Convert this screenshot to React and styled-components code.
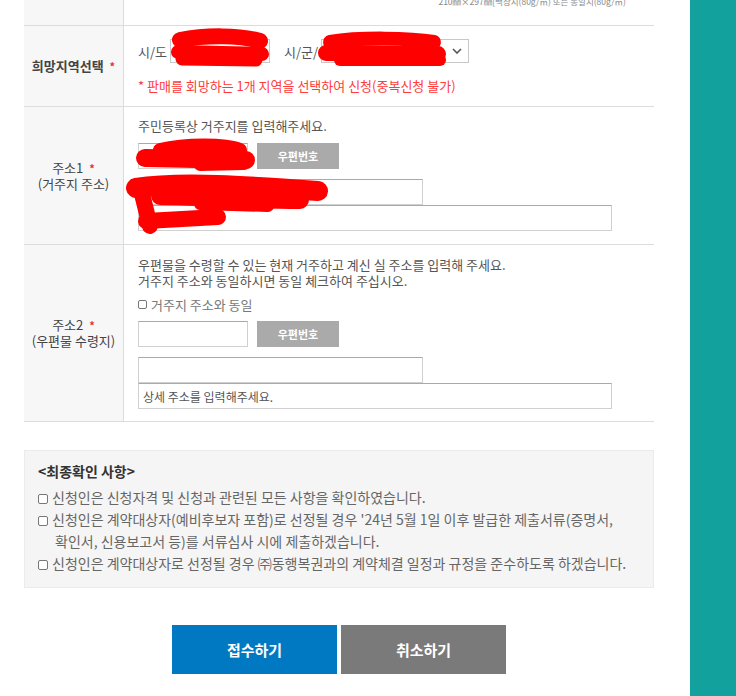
import React from "react";
import styled, { createGlobalStyle } from "styled-components";

const GlobalStyle = createGlobalStyle`
  body {
    margin: 0;
    background: #fff;
    font-family: "Noto Sans CJK KR", "Noto Sans", sans-serif;
    color: #555;
  }
`;

const Page = styled.div`
  position: relative;
  display: flex;
  width: 736px;
  height: 696px;
  overflow: hidden;
`;

const Main = styled.div`
  flex: 0 0 690px;
  box-sizing: border-box;
  padding: 0 36px 0 24px;
`;

const Side = styled.div`
  flex: 1;
  background: #12a19d;
`;

const Table = styled.div`
  margin-top: -20px;
`;

const Row = styled.div`
  display: grid;
  grid-template-columns: 100px 1fr;
  height: ${(p) => p.$h}px;
  box-sizing: border-box;
  border-bottom: 1px solid #dcdcdc;
`;

const Th = styled.div`
  background: #f7f7f7;
  border-right: 1px solid #dcdcdc;
  display: flex;
  flex-direction: column;
  align-items: center;
  justify-content: center;
  font-size: 13px;
  line-height: 16px;
  font-weight: ${(p) => (p.$bold ? 700 : 400)};
  color: #444;
  text-align: center;
  white-space: nowrap;
`;

const Req = styled.span`
  color: #e8322c;
  font-size: 11px;
  font-weight: 700;
  margin-left: 6px;
`;

const Td = styled.div`
  padding: ${(p) => p.$pt}px 0 0 14px;
  font-size: 13px;
  color: #555;
`;

const PaperNote = styled.div`
  text-align: right;
  padding: 15px 28px 0 0;
  font-size: 8.5px;
  line-height: 12px;
  color: #888;
`;

const Inline = styled.div`
  display: flex;
  align-items: center;
  gap: 3px;
  height: 24px;
`;

const Label = styled.span`
  margin-left: ${(p) => p.$ml || 0}px;
  color: #555;
`;

const SelectBox = styled.div`
  box-sizing: border-box;
  width: ${(p) => p.$w}px;
  height: 24px;
  border: 1px solid #c8c8c8;
  background: #fff;
  display: flex;
  align-items: center;
  justify-content: flex-end;
  padding-right: 6px;
`;

const Warn = styled.div`
  margin-top: 14px;
  line-height: 18px;
  color: #ff3b3b;
`;

const Text = styled.div`
  line-height: ${(p) => p.$lh || 18}px;
  color: #555;
`;

const CheckLine = styled.div`
  margin-top: 6px;
  height: 18px;
  display: flex;
  align-items: center;
  color: #777;
`;

const Box = styled.span`
  display: inline-block;
  box-sizing: border-box;
  width: ${(p) => p.$s || 10}px;
  height: ${(p) => p.$s || 10}px;
  border: 1px solid #777;
  border-radius: 2px;
  margin-right: 4px;
  background: #fff;
  vertical-align: -1px;
`;

const ZipRow = styled.div`
  display: flex;
  margin-top: 8px;
`;

const Input = styled.input`
  display: block;
  box-sizing: border-box;
  width: ${(p) => p.$w}px;
  height: 26px;
  margin: ${(p) => p.$mt || 0}px 0 0;
  padding: 0 4px;
  border: 1px solid #d0d0d0;
  border-top-color: #a9a9a9;
  background: #fff;
  font-family: inherit;
  font-size: 12px;
  color: #555;
  outline: none;
  &::placeholder {
    color: #555;
  }
`;

const ZipButton = styled.button`
  width: 82px;
  height: 26px;
  margin-left: 9px;
  border: none;
  background: #aaa;
  color: #fff;
  font-family: inherit;
  font-size: 11px;
  font-weight: 700;
  padding: 0;
`;

const Confirm = styled.div`
  margin-top: 28px;
  box-sizing: border-box;
  height: 138px;
  background: #f5f5f5;
  border: 1px solid #ebebeb;
  padding: 9px 13px 0;
`;

const ConfirmTitle = styled.div`
  font-size: 14px;
  font-weight: 700;
  line-height: 22px;
  color: #333;
  margin-bottom: 4px;
`;

const Item = styled.div`
  font-size: 14px;
  line-height: 22px;
  color: #666;
  padding-left: 17px;
  text-indent: -17px;
  white-space: nowrap;
`;

const Buttons = styled.div`
  margin-top: 37px;
  display: flex;
  justify-content: center;
  gap: 4px;
`;

const Action = styled.button`
  width: 165px;
  height: 49px;
  border: none;
  background: ${(p) => p.$bg};
  color: #fff;
  font-family: inherit;
  font-size: 15px;
  font-weight: 700;
`;

const Scribbles = styled.svg`
  position: absolute;
  top: 0;
  left: 0;
  pointer-events: none;
`;

const Chevron = () => (
  <svg width="10" height="6" viewBox="0 0 10 6">
    <path d="M1 1l4 4 4-4" stroke="#555" strokeWidth="1.6" fill="none" />
  </svg>
);

// red redaction marks over the personal data
const strokes = [
  ["M180 40 C205 35 240 35 260 41", 16],
  ["M178 52 L262 54", 14],
  ["M182 59 L256 60", 13],
  ["M330 42 C360 37 410 38 434 42", 14],
  ["M326 53 L438 54", 16],
  ["M340 60 L440 60", 12],
  ["M160 150 C185 144 225 144 240 150", 14],
  ["M145 158 L246 160", 18],
  ["M200 165 L244 164", 12],
  ["M136 188 C180 181 250 186 318 191", 20],
  ["M160 196 C200 196 240 200 300 200", 18],
  ["M200 204 L268 206", 12],
  ["M140 186 L150 226", 16],
  ["M146 221 L218 217", 16],
];

const App = () => (
  <>
    <GlobalStyle />
    <Page>
      <Main>
        <Table>
          <Row $h={46}>
            <Th />
            <PaperNote>210㎜×297㎜[백상지(80g/㎡) 또는 동일지(80g/㎡)</PaperNote>
          </Row>
          <Row $h={81}>
            <Th $bold>
              <div>
                희망지역선택<Req>*</Req>
              </div>
            </Th>
            <Td $pt={13}>
              <Inline>
                <Label>시/도</Label>
                <SelectBox $w={100}>
                  <Chevron />
                </SelectBox>
                <Label $ml={11}>시/군/</Label>
                <SelectBox $w={148}>
                  <Chevron />
                </SelectBox>
              </Inline>
              <Warn>* 판매를 회망하는 1개 지역을 선택하여 신청(중복신청 불가)</Warn>
            </Td>
          </Row>
          <Row $h={138}>
            <Th>
              <div>
                주소1<Req>*</Req>
              </div>
              <div>(거주지 주소)</div>
            </Th>
            <Td $pt={10}>
              <Text>주민등록상 거주지를 입력해주세요.</Text>
              <ZipRow>
                <Input $w={110} readOnly />
                <ZipButton>우편번호</ZipButton>
              </ZipRow>
              <Input $w={285} $mt={10} readOnly />
              <Input $w={474} readOnly />
            </Td>
          </Row>
          <Row $h={177}>
            <Th>
              <div>
                주소2<Req>*</Req>
              </div>
              <div>(우편물 수령지)</div>
            </Th>
            <Td $pt={12}>
              <Text $lh={16}>
                우편물을 수령할 수 있는 현재 거주하고 계신 실 주소를 입력해 주세요.
              </Text>
              <Text $lh={16}>거주지 주소와 동일하시면 동일 체크하여 주십시오.</Text>
              <CheckLine>
                <Box $s={9} />
                거주지 주소와 동일
              </CheckLine>
              <ZipRow>
                <Input $w={110} readOnly />
                <ZipButton>우편번호</ZipButton>
              </ZipRow>
              <Input $w={285} $mt={10} readOnly />
              <Input $w={474} placeholder="상세 주소를 입력해주세요." readOnly />
            </Td>
          </Row>
        </Table>

        <Confirm>
          <ConfirmTitle>&lt;최종확인 사항&gt;</ConfirmTitle>
          <Item>
            <Box />
            신청인은 신청자격 및 신청과 관련된 모든 사항을 확인하였습니다.
          </Item>
          <Item>
            <Box />
            신청인은 계약대상자(예비후보자 포함)로 선정될 경우 '24년 5월 1일 이후 발급한 제출서류(증명서,
            <br />
            확인서, 신용보고서 등)를 서류심사 시에 제출하겠습니다.
          </Item>
          <Item>
            <Box />
            신청인은 계약대상자로 선정될 경우 ㈜동행복권과의 계약체결 일정과 규정을 준수하도록 하겠습니다.
          </Item>
        </Confirm>

        <Buttons>
          <Action $bg="#0078c2">접수하기</Action>
          <Action $bg="#7a7a7a">취소하기</Action>
        </Buttons>
      </Main>
      <Side />
      <Scribbles width="736" height="696" viewBox="0 0 736 696">
        {strokes.map(([d, w], i) => (
          <path
            key={i}
            d={d}
            stroke="#ff0000"
            strokeWidth={w}
            strokeLinecap="round"
            strokeLinejoin="round"
            fill="none"
          />
        ))}
      </Scribbles>
    </Page>
  </>
);

export default App;
